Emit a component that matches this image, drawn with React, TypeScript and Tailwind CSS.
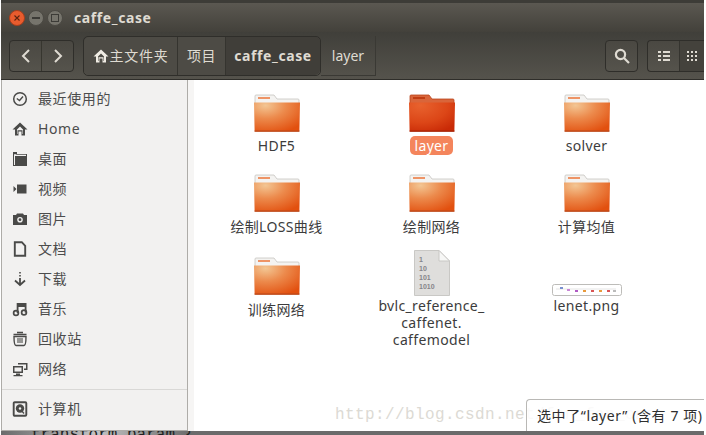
import React from "react";

const FONT = '"Noto Sans", "Noto Sans CJK SC", sans-serif';

function Folder({ selected = false, id }: { selected?: boolean; id: string }) {
  return (
    <svg width="48" height="40" viewBox="0 0 48 40">
      <defs>
        <radialGradient id={id} cx="0.25" cy="0.1" r="1">
          {selected ? (
            <>
              <stop offset="0" stopColor="#e8622e" />
              <stop offset="0.6" stopColor="#dc4617" />
              <stop offset="1" stopColor="#c92a06" />
            </>
          ) : (
            <>
              <stop offset="0" stopColor="#f3c693" />
              <stop offset="0.45" stopColor="#ec8a4c" />
              <stop offset="1" stopColor="#e2500f" />
            </>
          )}
        </radialGradient>
      </defs>
      <path
        d="M2 12V3a1 1 0 0 1 1-1h18l3 4h21a1 1 0 0 1 1 1v6z"
        fill={selected ? "#d9653a" : "#f4f3f1"}
        stroke={selected ? "#b9441c" : "#c6c4c0"}
        strokeWidth="0.8"
      />
      <rect x="5" y="4" width="12" height="2" fill={selected ? "#c03c12" : "#ee9466"} />
      <path d="M1 9.5h46l-0.6 28a1 1 0 0 1-1 1H2.6a1 1 0 0 1-1-1z" fill={`url(#${id})`} />
      <path d="M1.5 37.5h45v1.2H1.5z" fill={selected ? "#a32205" : "#b8471a"} />
    </svg>
  );
}

function DocIcon() {
  return (
    <svg width="36" height="46" viewBox="0 0 36 46">
      <path d="M0.5 0.5H25L35.5 11V45.5H0.5z" fill="#dfdedc" stroke="#c9c8c5" />
      <path d="M25 0.5V11H35.5z" fill="#f7f7f6" stroke="#c9c8c5" />
      <g fill="#86858a" fontSize="7" fontWeight="700" fontFamily='"Liberation Sans", sans-serif'>
        <text x="5" y="12">1</text>
        <text x="5" y="21">10</text>
        <text x="5" y="30">101</text>
        <text x="5" y="39">1010</text>
      </g>
    </svg>
  );
}

function Lenet() {
  const dots: [number, string][] = [
    [8, "#7a8fd0"], [15, "#c986d6"], [23, "#b05bc4"], [31, "#e89a3c"], [39, "#d95555"],
    [47, "#e89a3c"], [55, "#d95555"], [61, "#bbbbbb"],
  ];
  return (
    <svg width="70" height="12" viewBox="0 0 70 12">
      <rect x="0.5" y="0.5" width="69" height="11" rx="2" fill="#fff" stroke="#bdbcb9" />
      <path d="M4 5h60" stroke="#dadada" strokeWidth="0.7" />
      {dots.map(([x, c], i) => (
        <rect key={i} x={x} y={i === 0 ? 3 : i === 1 ? 5 : 6} width="3" height="2" fill={c} />
      ))}
    </svg>
  );
}

const c = "#4a4a48";
const icons: Record<string, React.ReactNode> = {
  clock: (
    <>
      <circle cx="8" cy="8" r="6.3" fill="none" stroke={c} strokeWidth="1.5" />
      <path d="M4.8 7.5 7.5 9.5 11 5.5" fill="none" stroke={c} strokeWidth="1.4" />
    </>
  ),
  home: <path d="M8 1.5 0.5 8.5H3v6h3.5v-4h3v4H13v-6h2.5zM5 8.5 8 5.5l3 3v4.5h-.5v-3.8h-5v3.8H5z" fill={c} fillRule="evenodd" />,
  folder: <path d="M1 1h4v2h10v12H1zM2 3.2V14h1V5h11V3.8H4.2V3.2z" fill={c} fillRule="evenodd" />,
  video: <path d="M5 3.5h9.5v9H5zM1.5 5v6L4.5 8z" fill={c} />,
  camera: (
    <>
      <path d="M1 4h3l1-1.5h6L12 4h3v10H1z" fill={c} />
      <circle cx="8" cy="8.7" r="2.8" fill="#f2f1f0" />
      <circle cx="8" cy="8.7" r="1.4" fill={c} />
    </>
  ),
  doc: <path d="M2.8 1.2h7l3.4 3.6v10H2.8z" fill="none" stroke={c} strokeWidth="1.9" />,
  download: (
    <>
      <path d="M8 1v1.6M8 4v1.6" stroke={c} strokeWidth="1.6" />
      <path d="M8 7v6M3 9.5 8 14l5-4.5" stroke={c} strokeWidth="1.8" fill="none" />
    </>
  ),
  music: (
    <>
      <circle cx="4" cy="12" r="2.4" fill="none" stroke={c} strokeWidth="1.7" />
      <circle cx="12" cy="11.5" r="2.4" fill="none" stroke={c} strokeWidth="1.7" />
      <path d="M5.6 12V3h8v8.5M5.6 5h8" fill="none" stroke={c} strokeWidth="1.8" />
    </>
  ),
  trash: (
    <>
      <path d="M1.5 3.5h13M5 1.5h6" stroke={c} strokeWidth="1.3" />
      <path d="M2 5.5c0 7 .8 9 2 9h8c1.2 0 2-2 2-9z" fill="none" stroke={c} strokeWidth="1.4" />
      <path d="M6 7v5M8 7v5M10 7v5" stroke={c} strokeWidth="1.1" />
    </>
  ),
  network: (
    <>
      <path d="M1 5h10v7H1z" fill={c} />
      <path d="M2.5 6.5h7v4h-7z" fill="#f2f1f0" />
      <path d="M4 12.5h4v1.5h2.5v1.2h-9V14H4z" fill={c} />
      <path d="M6 2h9.5v7H12V7.5h2V3.5H6z" fill={c} />
    </>
  ),
  disk: (
    <>
      <rect x="1.7" y="1.2" width="12.6" height="13.6" rx="1" fill="none" stroke={c} strokeWidth="1.9" />
      <circle cx="8" cy="7.5" r="4.2" fill={c} />
      <circle cx="8" cy="7.5" r="1.2" fill="#f2f1f0" />
      <path d="M9 9l3 3.5" stroke={c} strokeWidth="1.3" />
    </>
  ),
};

function Row({ icon, label }: { icon: string; label: string }) {
  return (
    <div className="h-[30px] flex items-center shrink-0">
      <svg width="16" height="16" viewBox="0 0 16 16" className="ml-[10px] mr-[10px] shrink-0">
        {icons[icon]}
      </svg>
      <span className="text-[14px] tracking-[0.6px] text-[#4c4c4c] leading-none">{label}</span>
    </div>
  );
}

function Item({
  icon,
  label,
  labelClass = "",
}: {
  icon: React.ReactNode;
  label: React.ReactNode;
  labelClass?: string;
}) {
  return (
    <div className="flex flex-col items-center w-[155px]">
      <div className="h-[48px] flex items-end justify-center">{icon}</div>
      <div className={`text-[14px] leading-[17px] tracking-[0.35px] text-[#3c3c3c] text-center ${labelClass}`}>{label}</div>
    </div>
  );
}

export default function App() {
  const btn =
    "h-[32px] flex items-center justify-center rounded-[4px] border border-[#2f2e2a] bg-gradient-to-b from-[#4a4842] to-[#55534c]";
  return (
    <div
      className="relative w-[706px] h-[435px] overflow-hidden bg-white flex flex-col pl-px pr-[2px]"
      style={{ fontFamily: FONT }}
    >
      <div className="h-[3px] bg-[#3d3c37] shrink-0" />
      {/* title bar */}
      <div className="h-[29px] shrink-0 flex items-center bg-gradient-to-b from-[#5b5851] to-[#43413b]">
        <div className="w-[16px] h-[16px] ml-[8px] rounded-full bg-[#e95c2e] border border-[#a83e1c] flex items-center justify-center">
          <svg width="8" height="8" viewBox="0 0 8 8">
            <path d="M1.5 1.5l5 5M6.5 1.5l-5 5" stroke="#5c2410" strokeWidth="1.1" />
          </svg>
        </div>
        <div className="w-[16px] h-[16px] ml-[3px] rounded-full bg-[#76746c] border border-[#4b4943] flex items-center justify-center">
          <div className="w-[8px] h-[2px] bg-[#3c3b37]" />
        </div>
        <div className="w-[16px] h-[16px] ml-[3px] rounded-full bg-[#76746c] border border-[#4b4943] flex items-center justify-center">
          <div className="w-[8px] h-[8px] border border-[#3c3b37]" />
        </div>
        <span className="ml-[11px] text-[14px] font-bold text-[#dfdbd2] tracking-[0.6px] -mt-[1px]">caffe_case</span>
      </div>
      {/* toolbar */}
      <div className="h-[48px] shrink-0 flex items-center pl-[8px] bg-gradient-to-b from-[#403f3a] to-[#55534c] border-b border-[#2f2e2a]">
        <div className={`${btn} w-[65px] shrink-0`}>
          <div className="w-[32px] h-full flex items-center justify-center border-r border-[#37362f]">
            <svg width="12" height="16" viewBox="0 0 12 16">
              <path d="M9 2 3 8l6 6" fill="none" stroke="#dfdbd2" strokeWidth="2" />
            </svg>
          </div>
          <div className="flex-1 flex items-center justify-center">
            <svg width="12" height="16" viewBox="0 0 12 16">
              <path d="M3 2l6 6-6 6" fill="none" stroke="#dfdbd2" strokeWidth="2" />
            </svg>
          </div>
        </div>
        <div className="ml-[9px] h-[40px] flex rounded-[5px] border border-[#2f2e2a] text-[14px] text-[#dfdbd2] shrink-0">
          <div className="w-[94px] flex items-center justify-center border-r border-[#35342f] bg-[#4d4b45] rounded-l-[5px]">
            <svg width="16" height="16" viewBox="0 0 16 16">
              <path d="M8 1.5 0.5 8.5H3v6h3.5v-4h3v4H13v-6h2.5zM5 8.5 8 5.5l3 3v4.5h-.5v-3.8h-5v3.8H5z" fill="#f0ece4" fillRule="evenodd" />
            </svg>
            <span className="tracking-[0.7px] ml-px">主文件夹</span>
          </div>
          <div className="w-[48px] flex items-center justify-center border-r border-[#35342f] bg-[#4d4b45] tracking-[0.5px]">项目</div>
          <div className="w-[94px] flex items-center justify-center bg-[#403e39] rounded-r-[5px] font-bold tracking-[0.6px]">
            caffe_case
          </div>
        </div>
        <div className="w-[55px] h-[40px] flex items-center justify-center text-[14px] text-[#dfdbd2] border-r border-b border-[#3a3934] shrink-0">
          layer
        </div>
        <div className={`${btn} w-[33px] ml-auto shrink-0`}>
          <svg width="18" height="18" viewBox="0 0 18 18">
            <circle cx="7.5" cy="7.5" r="4.6" fill="none" stroke="#dfdbd2" strokeWidth="2.2" />
            <path d="M11 11l5 5" stroke="#dfdbd2" strokeWidth="2.2" />
          </svg>
        </div>
        <div className={`${btn} w-[57px] ml-[9px] shrink-0 !justify-start rounded-r-none border-r-0`}>
          <div className="w-[32px] h-full flex items-center justify-center border-r border-[#35342f]">
            <svg width="12" height="12" viewBox="0 0 12 12" fill="#dfdbd2">
              <path d="M0 1h3v2H0zM5 1h7v2H5zM0 5h3v2H0zM5 5h7v2H5zM0 9h3v2H0zM5 9h7v2H5z" />
            </svg>
          </div>
          <div className="flex-1 h-full flex items-center justify-center bg-[#44423c]">
            <svg width="12" height="12" viewBox="0 0 12 12" fill="#dfdbd2">
              <path d="M1 1h2v2H1zM5 1h2v2H5zM9 1h2v2H9zM1 5h2v2H1zM5 5h2v2H5zM9 5h2v2H9zM1 9h2v2H1zM5 9h2v2H5zM9 9h2v2H9z" />
            </svg>
          </div>
        </div>
      </div>
      {/* body */}
      <div className="flex-1 min-h-0 flex">
        <div className="w-[187px] shrink-0 bg-[#f2f1f0] border-x border-[#aeaca8] border-b flex flex-col pt-[4px]">
          <Row icon="clock" label="最近使用的" />
          <Row icon="home" label="Home" />
          <Row icon="folder" label="桌面" />
          <Row icon="video" label="视频" />
          <Row icon="camera" label="图片" />
          <Row icon="doc" label="文档" />
          <Row icon="download" label="下载" />
          <Row icon="music" label="音乐" />
          <Row icon="trash" label="回收站" />
          <Row icon="network" label="网络" />
          <div className="h-px bg-[#d9d8d6] mt-[5px] mb-[4px]" />
          <Row icon="disk" label="计算机" />
        </div>
        <div className="w-[6px] shrink-0 bg-[#f6f5f4]" />
        <div className="flex-1 min-w-0 bg-white pl-[5px] pt-[5px] grid grid-cols-[155px_155px_155px] auto-rows-min">
          <Item icon={<Folder id="f1" />} label="HDF5" labelClass="mt-[4px] h-[28px]" />
          <Item
            icon={<Folder id="f2" selected />}
            label={<span className="inline-block rounded-[5px] bg-[#f4855c] text-white px-[4px] leading-[19px]">layer</span>}
            labelClass="mt-[3px] h-[29px]"
          />
          <Item icon={<Folder id="f3" />} label="solver" labelClass="mt-[4px] h-[28px]" />
          <Item icon={<Folder id="f4" />} label="绘制LOSS曲线" labelClass="mt-[5px] h-[30px]" />
          <Item icon={<Folder id="f5" />} label="绘制网络" labelClass="mt-[5px] h-[30px]" />
          <Item icon={<Folder id="f6" />} label="计算均值" labelClass="mt-[5px] h-[30px]" />
          <Item icon={<Folder id="f7" />} label="训练网络" labelClass="mt-[5px]" />
          <Item
            icon={<DocIcon />}
            label={
              <>
                bvlc_reference_
                <br />
                caffenet.
                <br />
                caffemodel
              </>
            }
            labelClass="mt-[1px]"
          />
          <Item icon={<Lenet />} label="lenet.png" labelClass="mt-[1px]" />
        </div>
      </div>
      <div className="relative h-[4px] shrink-0 overflow-hidden bg-gradient-to-r from-[#6b6b6b] via-[#6b6b6b] to-[#6b6b6b]">
        <div className="absolute left-0 top-0 h-full w-[190px] bg-gradient-to-r from-[#6b6b6b] via-[#c4c4c4] to-[#6b6b6b]" />
        <div
          className="absolute left-[30px] -top-[5px] text-[16px] leading-[18px] text-[#222] whitespace-nowrap"
          style={{ fontFamily: '"Liberation Mono", monospace' }}
        >
          transform_param {"{"}
        </div>
      </div>

      {/* watermark over the content */}
      <div
        className="absolute left-[335px] top-[403px] text-[16px] leading-[24px] text-[#dcdad4] tracking-[0.4px] whitespace-nowrap"
        style={{ fontFamily: '"Liberation Mono", monospace' }}
      >
        http://blog.csdn.net/fan_fan_once
      </div>
      {/* floating status */}
      <div className="absolute left-[526px] right-[2px] top-[399px] bottom-[4px] rounded-tl-[4px] border-t border-l border-[#b9b8b5] bg-white/85 flex items-center pl-[10px] text-[14px] tracking-[0.6px] text-[#2f2f2f] whitespace-nowrap">
        选中了“layer” (含有 7 项)
      </div>
    </div>
  );
}
